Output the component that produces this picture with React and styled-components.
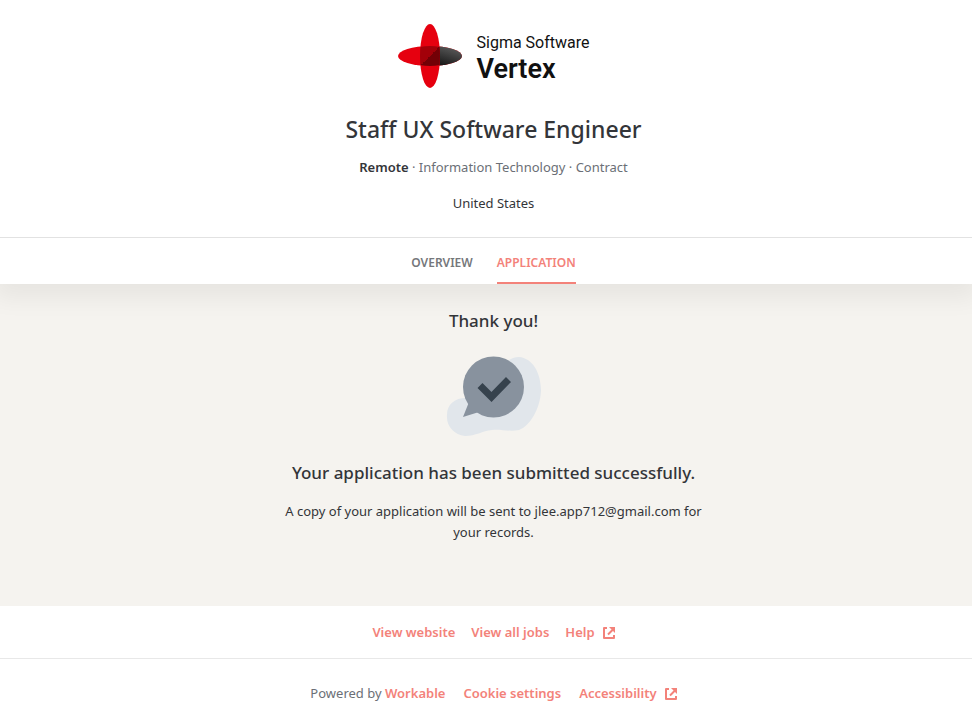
import React from 'react'
import styled, { createGlobalStyle } from 'styled-components'

const GlobalStyle = createGlobalStyle`
  * {
    box-sizing: border-box;
  }
  body {
    margin: 0;
    background: #ffffff;
    color: #333539;
    font-family: "Segoe UI", "Noto Sans", "Open Sans", sans-serif;
    font-size: 13px;
    line-height: 21px;
  }
  h1, h2, p {
    margin: 0;
  }
`

const Page = styled.div`
  display: flex;
  flex-direction: column;
  text-align: center;
  overflow-x: hidden;
`

const Header = styled.header`
  display: flex;
  flex-direction: column;
  align-items: center;
  padding: 24px 0 23px 15px;
  border-bottom: 1px solid #e2e2e2;
`

const Logo = styled.a`
  display: flex;
  align-items: center;
  gap: 15px;
  height: 64px;
  color: #111111;
  text-decoration: none;
  text-align: left;
  font-family: Roboto, sans-serif;
`

const LogoText = styled.span`
  display: flex;
  flex-direction: column;
  padding-top: 6px;
`

const Company = styled.span`
  font-size: 16px;
  line-height: 20px;
`

const Brand = styled.span`
  font-size: 27px;
  line-height: 32px;
  font-weight: 600;
`

const JobTitle = styled.h1`
  margin-top: 23px;
  font-size: 23px;
  line-height: 36px;
  font-weight: 500;
`

const Meta = styled.p`
  margin-top: 10px;
  color: #6b6f76;

  strong {
    color: #333539;
    font-weight: 600;
  }
`

const Location = styled.p`
  margin-top: 15px;
`

const Tabs = styled.nav`
  position: relative;
  display: flex;
  justify-content: center;
  gap: 24px;
  height: 46px;
  padding-left: 15px;
  background: #ffffff;
  box-shadow: 0 8px 24px 6px rgba(0, 0, 0, 0.06);
  clip-path: inset(0 0 -40px 0);
`

const Tab = styled.a`
  display: flex;
  align-items: center;
  padding-top: 4px;
  border-bottom: 2px solid ${(props) => (props.$active ? '#f3827a' : 'transparent')};
  color: ${(props) => (props.$active ? '#f3827a' : '#75777b')};
  font-size: 12px;
  font-weight: 600;
  text-decoration: none;
  text-transform: uppercase;
`

const Main = styled.main`
  display: flex;
  flex-direction: column;
  align-items: center;
  padding: 24px 0 63px 15px;
  background: #f5f3ef;
`

const Heading = styled.h2`
  font-size: 17px;
  line-height: 26px;
  font-weight: 500;
`

const Illustration = styled.svg`
  margin: 22px 0 24px;
`

const Note = styled.p`
  max-width: 440px;
  margin-top: 15px;
`

const FooterRow = styled.div`
  display: flex;
  justify-content: center;
  gap: ${(props) => props.$gap};
  padding: ${(props) => props.$padding};
  border-bottom: ${(props) => (props.$divider ? '1px solid #e8e8e8' : 'none')};
`

const Powered = styled.span`
  color: #6b6f76;
`

const FooterLink = styled.a`
  display: inline-flex;
  align-items: center;
  gap: 8px;
  color: #f3827a;
  font-weight: 600;
  text-decoration: none;
`

const ExternalIcon = () => (
  <svg width="12" height="12" viewBox="0 0 12 12" fill="none" stroke="currentColor" strokeWidth="2" aria-hidden="true">
    <path d="M4 1H1v10h10V8" strokeLinejoin="round" />
    <path d="M5 7.500 10 2.500" />
    <path d="M6 0h6v6z" fill="currentColor" stroke="none" />
  </svg>
)

const LogoMark = () => (
  <svg width="64" height="64" viewBox="0 0 64 64" aria-hidden="true">
    <defs>
      <linearGradient id="dark" x1="0" y1="1" x2="1" y2="0">
        <stop offset="0.3" stopColor="#111111" />
        <stop offset="1" stopColor="#666666" />
      </linearGradient>
      <linearGradient id="shade" x1="0" y1="0" x2="1" y2="1">
        <stop offset="0.5" stopColor="#a30009" />
        <stop offset="0.5" stopColor="#730006" />
      </linearGradient>
      <clipPath id="vertical">
        <ellipse cx="32" cy="32" rx="10" ry="32" />
      </clipPath>
      <clipPath id="right">
        <path d="M32 0h32v64H32z" />
      </clipPath>
    </defs>
    <ellipse cx="32" cy="32" rx="32" ry="10" fill="#e6000f" />
    <ellipse cx="32" cy="32" rx="32" ry="10" fill="url(#dark)" clipPath="url(#right)" />
    <ellipse cx="32" cy="32" rx="10" ry="32" fill="#e6000f" />
    <path d="M22 23q10-2 20 0v18q-10 2-20 0z" fill="url(#shade)" clipPath="url(#vertical)" />
  </svg>
)

const App = () => {
  return (
    <>
      <GlobalStyle />
      <Page>
        <Header>
          <Logo href="#">
            <LogoMark />
            <LogoText>
              <Company>Sigma Software</Company>
              <Brand>Vertex</Brand>
            </LogoText>
          </Logo>
          <JobTitle>Staff UX Software Engineer</JobTitle>
          <Meta>
            <strong>Remote</strong> · Information Technology · Contract
          </Meta>
          <Location>United States</Location>
        </Header>
        <Tabs>
          <Tab href="#overview">Overview</Tab>
          <Tab href="#application" $active>Application</Tab>
        </Tabs>
        <Main>
          <Heading>Thank you!</Heading>
          <Illustration width="96" height="80" viewBox="0 0 96 80" aria-hidden="true">
            <path
              d="M73 1C86 2 95 16 95 35C94 53 84 70 73 74C63 76 55 73 46 74C36 75 30 80 19 80C8 79 0 70 1 59C1 48 9 42 20 42L40 21C52 19 58 1 73 1Z"
              fill="#e1e6eb"
            />
            <circle cx="47.500" cy="31" r="30.500" fill="#88929e" />
            <path d="M17 61 23 46 33 56z" fill="#88929e" />
            <path d="M34 29.500 45.500 41 62.500 23.500" fill="none" stroke="#36424d" strokeWidth="7" />
          </Illustration>
          <Heading>Your application has been submitted successfully.</Heading>
          <Note>A copy of your application will be sent to jlee.app712@gmail.com for your records.</Note>
        </Main>
        <footer>
          <FooterRow $gap="16px" $padding="16px 0 15px 15px" $divider>
            <FooterLink href="#website">View website</FooterLink>
            <FooterLink href="#jobs">View all jobs</FooterLink>
            <FooterLink href="#help">Help <ExternalIcon /></FooterLink>
          </FooterRow>
          <FooterRow $gap="18px" $padding="24px 0 23px 15px">
            <Powered>
              Powered by <FooterLink href="#workable">Workable</FooterLink>
            </Powered>
            <FooterLink href="#cookies">Cookie settings</FooterLink>
            <FooterLink href="#accessibility">Accessibility <ExternalIcon /></FooterLink>
          </FooterRow>
        </footer>
      </Page>
    </>
  )
}

export default App
